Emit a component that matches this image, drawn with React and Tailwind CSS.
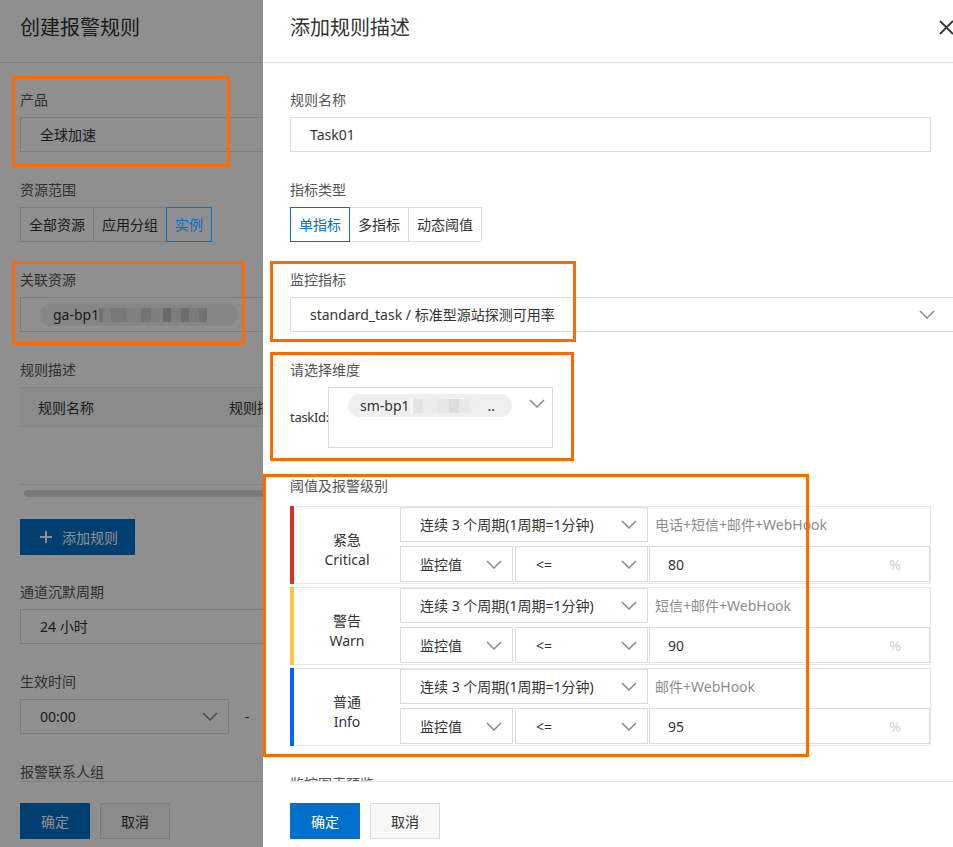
import React from 'react';

const FONT = "font-[family-name:'Noto_Sans','Noto_Sans_CJK_SC',sans-serif]";

function Chevron({ className = '' }) {
  return (
    <svg width="16" height="9" viewBox="0 0 16 9" fill="none" className={className}>
      <path d="M1 1l7 7 7-7" stroke="#8a8a8a" strokeWidth="1.5" />
    </svg>
  );
}

function Label({ children, className = '' }) {
  return <div className={`h-5 leading-5 text-[14px] text-[#555] mb-[7px] ${className}`}>{children}</div>;
}

function Input({ children, className = '' }) {
  return (
    <div className={`h-[35px] border border-[#dcdcdc] flex items-center pl-[19px] text-[14px] text-[#333] shrink-0 ${className}`}>
      {children}
    </div>
  );
}

function Select({ children, className = '' }) {
  return (
    <div className={`h-[35px] border border-[#dcdcdc] flex items-center justify-between pl-[19px] pr-[10px] text-[14px] text-[#333] shrink-0 ${className}`}>
      <span className="whitespace-nowrap">{children}</span>
      <Chevron />
    </div>
  );
}

function Seg({ items, active }) {
  return (
    <div className="flex">
      {items.map((t, i) => (
        <div
          key={t}
          className={`h-[35px] px-[8px] flex items-center text-[14px] border ${i ? '-ml-px' : ''} ${
            i === active ? 'relative z-10 border-[#0070cc] text-[#0070cc]' : 'border-[#dcdcdc] text-[#333]'
          }`}
        >
          {t}
        </div>
      ))}
    </div>
  );
}

function Blur({ blocks }) {
  return (
    <div className="flex items-center">
      {blocks.map(([w, c], i) => (
        <div key={i} className="h-[14px]" style={{ width: w, background: c }} />
      ))}
    </div>
  );
}

function Footer() {
  return (
    <div className="h-[66px] shrink-0 border-t border-[#e3e3e3] pt-[21px] flex gap-[10px]">
      <div className="h-9 w-[70px] bg-[#0070cc] text-white text-[14px] flex items-center justify-center">确定</div>
      <div className="h-9 w-[70px] bg-[#f7f7f7] border border-[#dcdcdc] text-[#333] text-[14px] flex items-center justify-center">取消</div>
    </div>
  );
}

const levels = [
  { cn: '紧急', en: 'Critical', bar: 'bg-[#d93026]', notify: '电话+短信+邮件+WebHook', val: '80' },
  { cn: '警告', en: 'Warn', bar: 'bg-[#ffc440]', notify: '短信+邮件+WebHook', val: '90' },
  { cn: '普通', en: 'Info', bar: 'bg-[#0064fa]', notify: '邮件+WebHook', val: '95' },
];

function LevelRow({ lv }) {
  return (
    <div className="flex h-[78px]">
      <div className={`w-1 shrink-0 ${lv.bar}`} />
      <div className="flex-1 flex border-t border-r border-b border-[#e8e8e8]">
        <div className="w-[106px] shrink-0 flex flex-col items-center justify-center pt-[10px] text-[14px] leading-5 text-[#333]">
          <div>{lv.cn}</div>
          <div>{lv.en}</div>
        </div>
        <div className="flex-1 flex flex-col">
          <div className="flex items-center">
            <Select className="w-[248px]">连续 3 个周期(1周期=1分钟)</Select>
            <span className="ml-[7px] text-[14px] text-[#8c8c8c] whitespace-nowrap">{lv.notify}</span>
          </div>
          <div className="flex mt-[4px]">
            <Select className="w-[113px] h-[36px]">监控值</Select>
            <Select className="w-[133px] h-[36px] ml-[2px] pl-[20px]">{'<='}</Select>
            <div className="flex-1 h-[36px] ml-px border border-[#dcdcdc] flex items-center justify-between pl-[18px] pr-[28px] text-[14px]">
              <span className="text-[#333]">{lv.val}</span>
              <span className="text-[#cfcfcf]">%</span>
            </div>
          </div>
        </div>
      </div>
    </div>
  );
}

function LeftPage() {
  return (
    <div className="w-[953px] h-[847px] bg-white flex flex-col pl-5">
      <div className="h-[63px] shrink-0 border-b border-[#e3e3e3] -ml-5 pl-5 pt-[14px] text-[20px] leading-7 text-[#333]">创建报警规则</div>
      <div className="flex-1 overflow-hidden pt-[27px]">
        <Label>产品</Label>
        <Input className="w-[700px]">全球加速</Input>

        <Label className="mt-[28px]">资源范围</Label>
        <Seg items={['全部资源', '应用分组', '实例']} active={2} />

        <Label className="mt-[28px]">关联资源</Label>
        <Input className="w-[700px]">
          <div className="h-[23px] w-[198px] rounded-full bg-[#efefef] flex items-center pl-[13px] text-[14px] text-[#333]">
            <span>ga-bp1</span>
            <Blur blocks={[[4, '#c9c9c9'], [8, '#e6e6e6'], [16, '#d6d6d6'], [14, '#e4e4e4'], [10, '#cfcfcf'], [12, '#e2e2e2'], [8, '#bdbdbd'], [10, '#dedede'], [8, '#c5c5c5'], [10, '#dcdcdc'], [8, '#cbcbcb']]} />
          </div>
        </Input>

        <Label className="mt-[28px]">规则描述</Label>
        <div className="w-[700px]">
          <div className="h-10 border-t border-b border-[#e8e8e8] bg-[#f7f7f7] flex items-center text-[14px] text-[#333]">
            <div className="w-[209px] shrink-0 pl-[18px]">规则名称</div>
            <div>规则描述</div>
          </div>
          <div className="h-[58px] border-b border-[#e8e8e8]" />
        </div>
        <div className="mt-[5px] ml-1 w-[690px] h-[7px] rounded-full bg-[#d9d9d9]" />
        <div className="mt-[22px] h-9 w-[115px] bg-[#0070cc] text-white text-[14px] flex items-center pl-5 gap-[10px]">
          <svg width="12" height="12" viewBox="0 0 12 12">
            <path d="M6 0v12M0 6h12" stroke="white" strokeWidth="2" />
          </svg>
          <span>添加规则</span>
        </div>

        <Label className="mt-[27px]">通道沉默周期</Label>
        <Input className="w-[700px]">24 小时</Input>

        <Label className="mt-[28px]">生效时间</Label>
        <div className="flex items-center">
          <Select className="w-[209px]">00:00</Select>
          <span className="ml-4 text-[14px] text-[#333]">-</span>
        </div>

        <Label className="mt-[28px]">报警联系人组</Label>
      </div>
      <Footer />
    </div>
  );
}

function Drawer() {
  return (
    <div className="absolute left-[263px] top-0 w-[690px] h-[847px] bg-white flex flex-col pl-[27px] overflow-hidden">
      <div className="h-[63px] shrink-0 border-b border-[#e3e3e3] -ml-[27px] pl-[27px] flex items-start">
        <div className="pt-[14px] text-[20px] leading-7 text-[#333]">添加规则描述</div>
        <svg width="15" height="15" viewBox="0 0 15 15" className="ml-auto mt-[20px] -mr-px">
          <path d="M1 1l13 13M14 1L1 14" stroke="#333" strokeWidth="1.8" />
        </svg>
      </div>
      <div className="flex-1 overflow-hidden pt-[27px]">
        <Label>规则名称</Label>
        <Input className="w-[641px]">Task01</Input>

        <Label className="mt-[28px]">指标类型</Label>
        <Seg items={['单指标', '多指标', '动态阈值']} active={0} />

        <Label className="mt-[28px]">监控指标</Label>
        <Select className="w-[670px] pr-[24px]">standard_task / 标准型源站探测可用率</Select>

        <Label className="mt-[28px]">请选择维度</Label>
        <div className="flex items-center">
          <span className="w-[38px] whitespace-nowrap text-[13px] tracking-[-0.3px] text-[#333]">taskId:</span>
          <div className="w-[225px] h-[61px] border border-[#dcdcdc] flex items-start justify-between pl-[19px] pr-[7px] pt-[6px]">
            <div className="h-[23px] w-[164px] rounded-full bg-[#efefef] flex items-center pl-[12px] text-[14px] text-[#333]">
              <span>sm-bp1</span>
              <Blur blocks={[[3, '#f7f7f7'], [10, '#e4e4e4'], [14, '#ececec'], [12, '#e6e6e6'], [10, '#dcdcdc'], [10, '#e8e8e8'], [14, '#eeeeee']]} />
              <span className="ml-[5px]">..</span>
            </div>
            <Chevron className="mt-[5px]" />
          </div>
        </div>

        <Label className="mt-[28px] mb-[10px]">阈值及报警级别</Label>
        <div className="w-[641px] flex flex-col gap-[3px]">
          {levels.map((lv) => (
            <LevelRow key={lv.en} lv={lv} />
          ))}
        </div>

        <Label className="mt-[28px]">监控图表预览</Label>
      </div>
      <Footer />
    </div>
  );
}

export default function App() {
  return (
    <div className={`relative w-[953px] h-[847px] overflow-hidden ${FONT}`}>
      <LeftPage />
      <div className="absolute inset-0 bg-black/[0.44]" />
      <Drawer />
      {/* annotation boxes */}
      <div className="absolute left-[12px] top-[76px] w-[218px] h-[91px] border-[3px] border-[#ff6a00]" />
      <div className="absolute left-[12px] top-[261px] w-[233px] h-[84px] border-[3px] border-[#ff6a00]" />
      <div className="absolute left-[270px] top-[261px] w-[306px] h-[81px] border-[3px] border-[#ff6a00]" />
      <div className="absolute left-[270px] top-[352px] w-[304px] h-[109px] border-[3px] border-[#ff6a00]" />
      <div className="absolute left-[263px] top-[474px] w-[546px] h-[283px] border-[3px] border-[#ff6a00]" />
    </div>
  );
}
